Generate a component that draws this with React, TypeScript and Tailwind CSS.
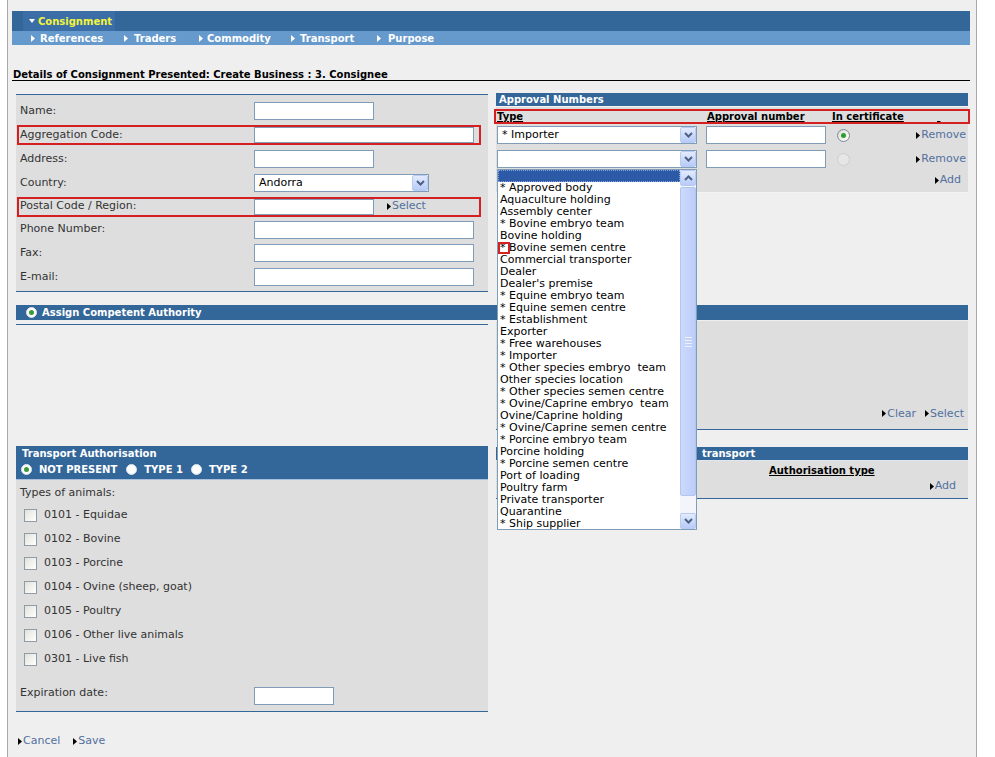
import React from "react";

function Tri({ color = "#000" }: { color?: string }) {
  return (
    <svg width="4" height="7" viewBox="0 0 4 7" className="inline-block shrink-0">
      <path d="M0 0L4 3.5L0 7z" fill={color} />
    </svg>
  );
}

function Link({ children }: { children: React.ReactNode }) {
  return (
    <span className="inline-flex items-center text-[#52709f] cursor-pointer">
      <Tri />
      <span className="ml-[1px]">{children}</span>
    </span>
  );
}

function Chevron({ up = false }: { up?: boolean }) {
  return (
    <span className="w-[16px] h-[16px] shrink-0 flex items-center justify-center rounded-[2px] border border-[#b9cbf3] bg-linear-to-b from-[#e3ebfd] to-[#b7cbf7]">
      <svg width="9" height="6" viewBox="0 0 9 6">
        <path d={up ? "M1 5l3.5-3.5L8 5" : "M1 1l3.5 3.5L8 1"} stroke="#4d6185" strokeWidth="2" fill="none" />
      </svg>
    </span>
  );
}

function Select({ value, w }: { value: string; w: string }) {
  return (
    <span className={`flex items-center h-[18px] border border-[#7f9db9] bg-white ${w}`}>
      <span className="flex-1 pl-[4px] text-[#000] leading-[16px]">{value}</span>
      <Chevron />
    </span>
  );
}

function HeadRadio({ on = false }: { on?: boolean }) {
  return (
    <span className="w-[11px] h-[11px] shrink-0 rounded-full bg-white border border-[#d8e2ee] flex items-center justify-center">
      {on && <span className="w-[5px] h-[5px] rounded-full bg-[#3a9a3a]" />}
    </span>
  );
}

function FormRow({
  label,
  red = false,
  h = "h-[24px]",
  children,
}: {
  label: string;
  red?: boolean;
  h?: string;
  children?: React.ReactNode;
}) {
  return (
    <div className={`flex items-center ${h}`}>
      <div
        className={`ml-[1px] w-[464px] h-[20px] flex items-center border-2 ${
          red ? "border-[#d42020]" : "border-transparent"
        }`}
      >
        <span className="w-[235px] pl-[1px] shrink-0">{label}</span>
        {children}
      </div>
    </div>
  );
}

const navItems = [
  { name: "References", cls: "w-[93px]", gap: "ml-[5px]" },
  { name: "Traders", cls: "w-[75px]", gap: "ml-[6px]" },
  { name: "Commodity", cls: "w-[92px]", gap: "ml-[4px]" },
  { name: "Transport", cls: "w-[86px]", gap: "ml-[5px]" },
  { name: "Purpose", cls: "w-[80px]", gap: "ml-[7px]" },
];

const types = [
  "* Approved body",
  "Aquaculture holding",
  "Assembly center",
  "* Bovine embryo team",
  "Bovine holding",
  "* Bovine semen centre",
  "Commercial transporter",
  "Dealer",
  "Dealer's premise",
  "* Equine embryo team",
  "* Equine semen centre",
  "* Establishment",
  "Exporter",
  "* Free warehouses",
  "* Importer",
  "* Other species embryo\u00a0 team",
  "Other species location",
  "* Other species semen centre",
  "* Ovine/Caprine embryo\u00a0 team",
  "Ovine/Caprine holding",
  "* Ovine/Caprine semen centre",
  "* Porcine embryo team",
  "Porcine holding",
  "* Porcine semen centre",
  "Port of loading",
  "Poultry farm",
  "Private transporter",
  "Quarantine",
  "* Ship supplier",
];

const animals = [
  "0101 - Equidae",
  "0102 - Bovine",
  "0103 - Porcine",
  "0104 - Ovine (sheep, goat)",
  "0105 - Poultry",
  "0106 - Other live animals",
  "0301 - Live fish",
];

function Dropdown() {
  return (
    <div className="absolute left-0 top-[19px] z-10 w-[200px] h-[361px] border border-[#7f9db9] bg-white flex overflow-hidden">
      <div className="flex-1 text-[11px] leading-[12px] text-black">
        <div className="h-[12px] bg-[#2c5aa6] border border-dotted border-[#8aa6d8]" />
        {types.map((t) => (
          <div key={t} className="relative h-[12px] pl-[2px] whitespace-nowrap">
            {t}
            {t === "* Bovine semen centre" && (
              <span className="absolute left-0 top-0 w-[12px] h-[12px] border-2 border-[#d42020] pointer-events-none" />
            )}
          </div>
        ))}
      </div>
      <div className="w-[16px] flex flex-col bg-[#f3f5fb]">
        <Chevron up />
        <div className="mt-[1px] h-[309px] rounded-[2px] border border-[#b3c5f1] bg-linear-to-r from-[#cbd9fc] to-[#bccdf8] flex flex-col items-center justify-center gap-[2px]">
          <span className="w-[7px] h-px bg-[#eef2fd]" />
          <span className="w-[7px] h-px bg-[#eef2fd]" />
          <span className="w-[7px] h-px bg-[#eef2fd]" />
          <span className="w-[7px] h-px bg-[#eef2fd]" />
        </div>
        <div className="flex-1" />
        <Chevron />
      </div>
    </div>
  );
}

export default function App() {
  return (
    <div className="w-[995px] h-[757px] bg-white overflow-hidden font-['DejaVu_Sans',Verdana,sans-serif] text-[11px] text-[#333]">
      <div className="ml-[7px] w-[970px] h-full border-x border-[#a8a8a8] bg-[#efefef]">
        {/* navigation */}
        <div className="ml-[4px] w-[958px] pt-[11px] text-[10px] font-bold">
          <div className="h-[20px] bg-[#336699] pl-[11px] flex">
            <div className="h-full w-[92px] bg-[#3b6ea6] flex items-center pl-[6px] text-[#f4f43c]">
              <svg width="6" height="4" viewBox="0 0 6 4" className="mr-[3px]">
                <path d="M0 0L6 0L3 4z" fill="#fff" />
              </svg>
              Consignment
            </div>
          </div>
          <div className="h-[14px] bg-[#6699cc] pl-[19px] flex items-center text-white">
            {navItems.map((n) => (
              <span key={n.name} className={`flex items-center ${n.cls}`}>
                <Tri color="#fff" />
                <span className={n.gap}>{n.name}</span>
              </span>
            ))}
          </div>
        </div>

        {/* title */}
        <div className="ml-[4px] w-[958px] mt-[22px] h-[14px] pt-[1px] border-b border-black pl-[1px] text-[10px] font-bold leading-[13px] text-black">
          Details of Consignment Presented: Create Business : 3. Consignee
        </div>

        {/* consignee + approval numbers */}
        <div className="mt-[12px] ml-[8px] flex items-start gap-[8px]">
          <div className="w-[472px] mt-[1px] border-t border-b border-[#336699] bg-[#dedede] pt-[4px] pb-[2px]">
            <FormRow label="Name:">
              <span className="block w-[120px] h-[18px] border border-[#7f9db9] bg-white" />
            </FormRow>
            <FormRow label="Aggregation Code:" red>
              <span className="block w-[220px] h-[16px] border border-[#7f9db9] bg-white" />
            </FormRow>
            <FormRow label="Address:">
              <span className="block w-[120px] h-[18px] border border-[#7f9db9] bg-white" />
            </FormRow>
            <FormRow label="Country:">
              <Select value="Andorra" w="w-[175px]" />
            </FormRow>
            <FormRow label="Postal Code / Region:" red h="h-[23px]">
              <span className="block w-[120px] h-[16px] border border-[#7f9db9] bg-white" />
              <span className="ml-[13px]">
                <Link>Select</Link>
              </span>
            </FormRow>
            <FormRow label="Phone Number:" h="h-[23px]">
              <span className="block w-[220px] h-[18px] border border-[#7f9db9] bg-white" />
            </FormRow>
            <FormRow label="Fax:">
              <span className="block w-[220px] h-[18px] border border-[#7f9db9] bg-white" />
            </FormRow>
            <FormRow label="E-mail:">
              <span className="block w-[220px] h-[18px] border border-[#7f9db9] bg-white" />
            </FormRow>
          </div>

          <div className="w-[472px]">
            <div className="h-[13px] bg-[#336699] text-white font-bold text-[10px] leading-[13px] pl-[3px]">
              Approval Numbers
            </div>
            <div className="bg-[#dedede] border-t border-[#f4f4f4] pt-[2px] pb-[1px] border-b border-[#336699]">
              <div className="-mx-[2px] h-[15px] border-2 border-[#d42020] flex items-center pl-[1px] text-[10px] font-bold text-black underline leading-[11px]">
                <span className="w-[210px]">Type</span>
                <span className="w-[125px]">Approval number</span>
                <span className="w-[105px]">In certificate</span>
                <span>&nbsp;</span>
              </div>
              <div className="mt-[1px] h-[20px] flex items-center pl-[1px]">
                <Select value="* Importer" w="w-[200px]" />
                <span className="ml-[9px] block w-[120px] h-[18px] border border-[#7f9db9] bg-white" />
                <span className="ml-[11px] w-[13px] h-[13px] rounded-full border border-[#7d8a96] bg-linear-to-br from-[#dcdcd6] to-white flex items-center justify-center">
                  <span className="w-[5px] h-[5px] rounded-full bg-[#2f9e2f]" />
                </span>
                <span className="flex-1 flex justify-end pr-[2px]">
                  <Link>Remove</Link>
                </span>
              </div>
              <div className="mt-[4px] h-[20px] flex items-center pl-[1px]">
                <span className="relative">
                  <Select value="" w="w-[200px]" />
                  <Dropdown />
                </span>
                <span className="ml-[9px] block w-[120px] h-[18px] border border-[#7f9db9] bg-white" />
                <span className="ml-[11px] w-[13px] h-[13px] rounded-full border border-[#cdcdcd] bg-[#e6e6e6]" />
                <span className="flex-1 flex justify-end pr-[2px]">
                  <Link>Remove</Link>
                </span>
              </div>
              <div className="h-[22px] flex items-center justify-end pr-[7px]">
                <Link>Add</Link>
              </div>
            </div>
          </div>
        </div>

        {/* competent authority */}
        <div className="mt-[13px] ml-[8px] w-[952px]">
          <div className="h-[15px] bg-[#336699] flex items-center pl-[10px] text-white font-bold text-[10px]">
            <HeadRadio on />
            <span className="ml-[5px]">Assign Competent Authority</span>
          </div>
          <div className="flex items-start gap-[8px]">
            <div className="w-[472px] mt-[4px] border-t border-[#336699] h-[100px]" />
            <div className="w-[472px] mt-[1px] h-[109px] bg-[#dedede] border-b border-[#336699] flex items-end justify-end gap-[9px] pr-[4px] pb-[7px]">
              <Link>Clear</Link>
              <Link>Select</Link>
            </div>
          </div>
        </div>

        {/* transport */}
        <div className="mt-[16px] ml-[8px] flex items-start gap-[8px]">
          <div className="w-[472px]">
            <div className="bg-[#336699] pt-[1px] pb-[1px] text-white font-bold text-[10px] border-b border-[#a9bfdb]">
              <div className="h-[14px] leading-[14px] pl-[6px]">Transport Authorisation</div>
              <div className="h-[17px] flex items-center pl-[5px]">
                <HeadRadio on />
                <span className="ml-[7px]">NOT PRESENT</span>
                <span className="ml-[9px]">
                  <HeadRadio />
                </span>
                <span className="ml-[7px]">TYPE 1</span>
                <span className="ml-[8px]">
                  <HeadRadio />
                </span>
                <span className="ml-[7px]">TYPE 2</span>
              </div>
            </div>
            <div className="bg-[#dedede] pt-[6px] pb-[4px] border-b border-[#336699]">
              <div className="h-[13px] leading-[13px] pl-[4px]">Types of animals:</div>
              <div className="mt-[4px]">
                {animals.map((a) => (
                  <div key={a} className="h-[24px] flex items-center pl-[8px]">
                    <span className="w-[13px] h-[13px] border border-[#8f9ba7] bg-linear-to-br from-[#e2e2dc] to-white" />
                    <span className="ml-[7px]">{a}</span>
                  </div>
                ))}
              </div>
              <div className="mt-[14px] h-[22px] flex items-center pl-[4px]">
                <span className="w-[234px] -mt-[5px]">Expiration date:</span>
                <span className="block w-[80px] h-[18px] border border-[#7f9db9] bg-white" />
              </div>
            </div>
          </div>

          <div className="w-[472px] mt-[1px]">
            <div className="h-[13px] bg-[#336699] text-white font-bold text-[10px] leading-[13px] pl-[206px] border-b border-[#dfe6ef] box-content whitespace-nowrap overflow-hidden">
              transport
            </div>
            <div className="bg-[#dedede] h-[38px] border-b border-[#336699] pt-[3px]">
              <div className="h-[13px] leading-[13px] pl-[273px] text-[10px] font-bold text-black underline">
                Authorisation type
              </div>
              <div className="h-[18px] flex items-center justify-end pr-[12px]">
                <Link>Add</Link>
              </div>
            </div>
          </div>
        </div>

        {/* footer */}
        <div className="mt-[23px] pl-[10px] h-[12px] flex items-center gap-[13px]">
          <Link>Cancel</Link>
          <Link>Save</Link>
        </div>
      </div>
    </div>
  );
}
